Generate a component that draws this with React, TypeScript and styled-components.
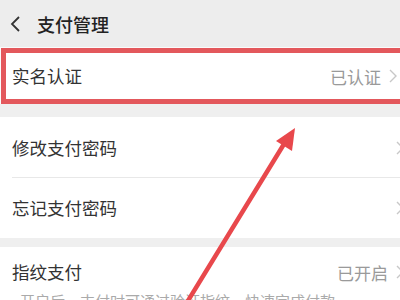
import React from "react";
import styled, { createGlobalStyle } from "styled-components";

const Global = createGlobalStyle`
  html, body { margin: 0; padding: 0; background: #efefef; }
  body { font-family: "Noto Sans CJK SC", "Noto Sans", sans-serif; }
`;

const Page = styled.div`
  position: relative;
  width: 400px;
  height: 300px;
  overflow: hidden;
  background: #efefef;
`;

const Header = styled.div`
  height: 47px;
  display: flex;
  align-items: center;
  padding-left: 10px;
  background: #ededed;
  box-sizing: border-box;
`;

const Title = styled.div`
  margin-left: 15px;
  font-size: 18px;
  font-weight: 500;
  color: #222;
  line-height: 1;
`;

const HighlightWrap = styled.div`
  background: #fbfbfb;
  padding-top: 1px;
`;

const Highlight = styled.div`
  margin-left: 1px;
  margin-right: -10px;
  height: 56px;
  box-sizing: border-box;
  border: 5px solid #e3585c;
  background: #fff;
  display: flex;
  align-items: center;
  padding-left: 6px;
  padding-right: 8px;
`;

const Gap = styled.div<{ $h: number }>`
  height: ${(p) => p.$h}px;
  background: #efefef;
`;

const Group = styled.div`
  background: #fff;
`;

const Row = styled.div<{ $h: number; $divider?: boolean }>`
  height: ${(p) => p.$h}px;
  display: flex;
  align-items: center;
  padding-left: 12px;
  margin-right: -4px;
  position: relative;
  ${(p) =>
    p.$divider &&
    `&::after { content: ""; position: absolute; left: 12px; right: 0; bottom: 0; height: 1px; background: #e8e8e8; }`}
`;

const Label = styled.div`
  flex: 1;
  font-size: 17.5px;
  color: #333;
  line-height: 1;
`;

const Value = styled.div`
  font-size: 17px;
  color: #9a9a9a;
  line-height: 1;
  margin-right: 8px;
`;

const Chevron = styled.svg`
  width: 8px;
  height: 14px;
  flex: none;
`;

const Desc = styled.div`
  padding-left: 20px;
  margin-top: -4px;
  padding-bottom: 10px;
  font-size: 15px;
  color: #aaa;
  white-space: nowrap;
  line-height: 1;
`;

const Arrow = styled.svg`
  position: absolute;
  left: 0;
  top: 0;
  width: 400px;
  height: 300px;
  pointer-events: none;
`;

const RightArrow = ({ color = "#c8c8c8" }: { color?: string }) => (
  <Chevron viewBox="0 0 8 14">
    <path d="M1 1 L7 7 L1 13" fill="none" stroke={color} strokeWidth="1.4" />
  </Chevron>
);

export default function App() {
  return (
    <>
      <Global />
      <Page>
        <Header>
          <svg width="12" height="16" viewBox="0 0 12 16">
            <path d="M9 1 L2 8 L9 15" fill="none" stroke="#333" strokeWidth="1.8" />
          </svg>
          <Title>支付管理</Title>
        </Header>
        <HighlightWrap>
          <Highlight>
            <Label>实名认证</Label>
            <Value>已认证</Value>
            <RightArrow />
          </Highlight>
        </HighlightWrap>
        <Gap $h={13} />
        <Group>
          <Row $h={61} $divider>
            <Label>修改支付密码</Label>
            <RightArrow />
          </Row>
          <Row $h={60}>
            <Label>忘记支付密码</Label>
            <RightArrow />
          </Row>
        </Group>
        <Gap $h={9} />
        <Group>
          <Row $h={50}>
            <Label>指纹支付</Label>
            <Value>已开启</Value>
            <RightArrow />
          </Row>
          <Desc>开启后，支付时可通过验证指纹，快速完成付款。</Desc>
        </Group>
        <Arrow viewBox="0 0 400 300">
          <line x1="186" y1="304" x2="284" y2="144" stroke="#e8484c" strokeWidth="4.5" strokeLinecap="round" />
          <polygon points="295,128 276,141 292,151" fill="#e8484c" />
        </Arrow>
      </Page>
    </>
  );
}
